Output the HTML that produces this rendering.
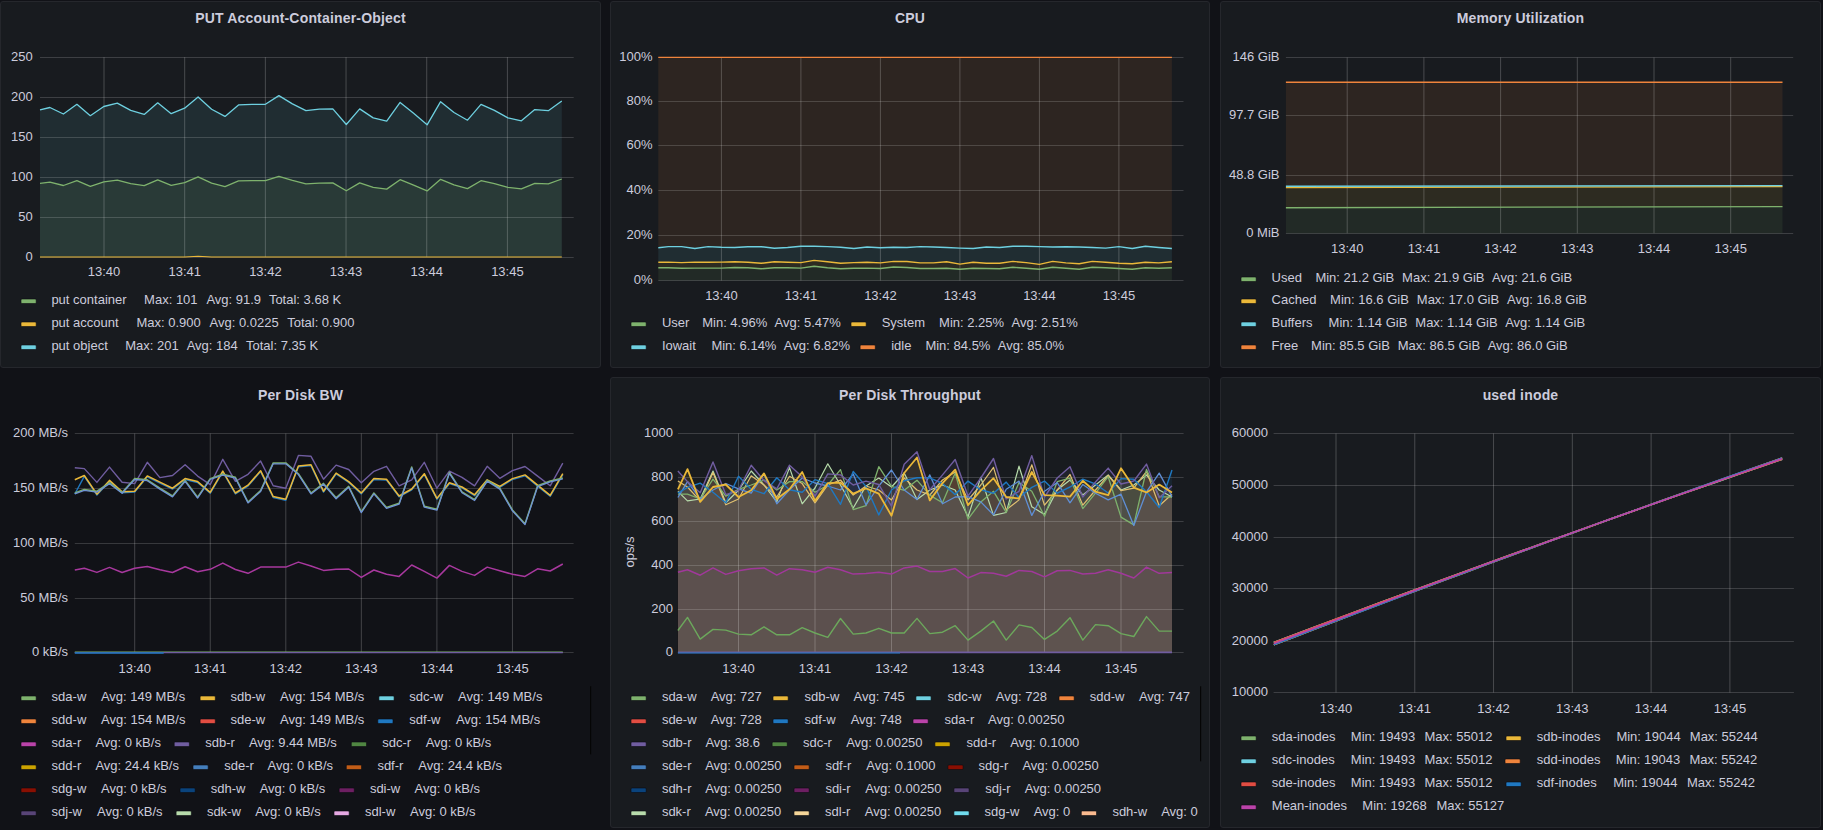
<!DOCTYPE html>
<html><head><meta charset="utf-8"><title>Grafana dashboard</title>
<style>
html,body{margin:0;padding:0;background:#111217;overflow:hidden;}
svg{display:block;font-family:"Liberation Sans",sans-serif;font-size:13px;fill:#ccccdc;}
</style></head><body>
<svg width="1823" height="830" viewBox="0 0 1823 830">
<rect width="1823" height="830" fill="#111217"/>
<rect x="0.5" y="1.5" width="600" height="366" rx="2.5" fill="#181b1f" stroke="#25272c" stroke-width="1"/>
<text x="300.5" y="22.9" text-anchor="middle" font-weight="bold" font-size="14" letter-spacing="0.18">PUT Account-Container-Object</text>
<text x="32.8" y="260.9" text-anchor="end">0</text>
<text x="32.8" y="220.9" text-anchor="end">50</text>
<text x="32.8" y="181.0" text-anchor="end">100</text>
<text x="32.8" y="141.0" text-anchor="end">150</text>
<text x="32.8" y="101.1" text-anchor="end">200</text>
<text x="32.8" y="61.1" text-anchor="end">250</text>
<polygon points="40.0,109.9 49.9,107.5 63.4,114.0 76.9,104.3 90.3,115.7 103.8,106.5 117.3,103.1 130.7,110.4 144.2,114.4 157.7,102.8 171.2,113.7 184.6,108.2 198.1,96.9 211.6,109.2 225.0,116.4 238.5,104.9 252.0,104.3 265.4,104.3 278.9,95.6 292.4,103.9 305.9,110.7 319.3,109.2 332.8,108.9 346.3,124.5 359.7,108.9 373.2,117.9 386.7,121.2 400.1,102.4 413.6,113.3 427.1,124.8 440.6,101.7 454.0,112.5 467.5,120.2 481.0,104.3 494.4,110.4 507.9,117.9 521.4,120.8 534.8,109.6 548.3,110.7 561.8,101.0 561.8,257.0 40.0,257.0" fill="#6ED0E0" fill-opacity="0.1"/>
<polygon points="40.0,183.4 49.9,182.2 63.4,185.5 76.9,180.7 90.3,186.3 103.8,181.8 117.3,180.1 130.7,183.7 144.2,185.7 157.7,179.9 171.2,185.3 184.6,182.6 198.1,176.9 211.6,183.1 225.0,186.7 238.5,180.9 252.0,180.7 265.4,180.7 278.9,176.3 292.4,180.4 305.9,183.8 319.3,183.1 332.8,182.9 346.3,190.8 359.7,182.9 373.2,187.4 386.7,189.1 400.1,179.7 413.6,185.2 427.1,190.9 440.6,179.3 454.0,184.8 467.5,188.6 481.0,180.7 494.4,183.7 507.9,187.4 521.4,188.9 534.8,183.3 548.3,183.8 561.8,179.0 561.8,257.0 40.0,257.0" fill="#7EB26D" fill-opacity="0.1"/>
<line x1="40.0" y1="257.50" x2="573.7" y2="257.50" stroke="rgba(255,255,255,0.16)" stroke-width="1"/>
<line x1="40.0" y1="217.50" x2="573.7" y2="217.50" stroke="rgba(255,255,255,0.16)" stroke-width="1"/>
<line x1="40.0" y1="177.50" x2="573.7" y2="177.50" stroke="rgba(255,255,255,0.16)" stroke-width="1"/>
<line x1="40.0" y1="137.50" x2="573.7" y2="137.50" stroke="rgba(255,255,255,0.16)" stroke-width="1"/>
<line x1="40.0" y1="97.50" x2="573.7" y2="97.50" stroke="rgba(255,255,255,0.16)" stroke-width="1"/>
<line x1="40.0" y1="57.50" x2="573.7" y2="57.50" stroke="rgba(255,255,255,0.16)" stroke-width="1"/>
<line x1="104.00" y1="57.2" x2="104.00" y2="257.0" stroke="rgba(255,255,255,0.21)" stroke-width="1"/>
<line x1="184.68" y1="57.2" x2="184.68" y2="257.0" stroke="rgba(255,255,255,0.21)" stroke-width="1"/>
<line x1="265.36" y1="57.2" x2="265.36" y2="257.0" stroke="rgba(255,255,255,0.21)" stroke-width="1"/>
<line x1="346.04" y1="57.2" x2="346.04" y2="257.0" stroke="rgba(255,255,255,0.21)" stroke-width="1"/>
<line x1="426.72" y1="57.2" x2="426.72" y2="257.0" stroke="rgba(255,255,255,0.21)" stroke-width="1"/>
<line x1="507.40" y1="57.2" x2="507.40" y2="257.0" stroke="rgba(255,255,255,0.21)" stroke-width="1"/>
<polyline points="40.0,109.9 49.9,107.5 63.4,114.0 76.9,104.3 90.3,115.7 103.8,106.5 117.3,103.1 130.7,110.4 144.2,114.4 157.7,102.8 171.2,113.7 184.6,108.2 198.1,96.9 211.6,109.2 225.0,116.4 238.5,104.9 252.0,104.3 265.4,104.3 278.9,95.6 292.4,103.9 305.9,110.7 319.3,109.2 332.8,108.9 346.3,124.5 359.7,108.9 373.2,117.9 386.7,121.2 400.1,102.4 413.6,113.3 427.1,124.8 440.6,101.7 454.0,112.5 467.5,120.2 481.0,104.3 494.4,110.4 507.9,117.9 521.4,120.8 534.8,109.6 548.3,110.7 561.8,101.0" fill="none" stroke="#6ED0E0" stroke-width="1.3" stroke-linejoin="round"/>
<polyline points="40.0,183.4 49.9,182.2 63.4,185.5 76.9,180.7 90.3,186.3 103.8,181.8 117.3,180.1 130.7,183.7 144.2,185.7 157.7,179.9 171.2,185.3 184.6,182.6 198.1,176.9 211.6,183.1 225.0,186.7 238.5,180.9 252.0,180.7 265.4,180.7 278.9,176.3 292.4,180.4 305.9,183.8 319.3,183.1 332.8,182.9 346.3,190.8 359.7,182.9 373.2,187.4 386.7,189.1 400.1,179.7 413.6,185.2 427.1,190.9 440.6,179.3 454.0,184.8 467.5,188.6 481.0,180.7 494.4,183.7 507.9,187.4 521.4,188.9 534.8,183.3 548.3,183.8 561.8,179.0" fill="none" stroke="#7EB26D" stroke-width="1.3" stroke-linejoin="round"/>
<polyline points="40.0,257.0 49.9,257.0 63.4,257.0 76.9,257.0 90.3,257.0 103.8,257.0 117.3,257.0 130.7,257.0 144.2,257.0 157.7,257.0 171.2,257.0 184.6,257.0 198.1,256.3 211.6,257.0 225.0,257.0 238.5,257.0 252.0,257.0 265.4,257.0 278.9,257.0 292.4,257.0 305.9,257.0 319.3,257.0 332.8,257.0 346.3,257.0 359.7,257.0 373.2,257.0 386.7,257.0 400.1,257.0 413.6,257.0 427.1,257.0 440.6,257.0 454.0,257.0 467.5,257.0 481.0,257.0 494.4,257.0 507.9,257.0 521.4,257.0 534.8,257.0 548.3,257.0 561.8,257.0" fill="none" stroke="#EAB839" stroke-width="1.1" stroke-linejoin="round"/>
<text x="104.0" y="275.9" text-anchor="middle">13:40</text>
<text x="184.7" y="275.9" text-anchor="middle">13:41</text>
<text x="265.4" y="275.9" text-anchor="middle">13:42</text>
<text x="346.0" y="275.9" text-anchor="middle">13:43</text>
<text x="426.7" y="275.9" text-anchor="middle">13:44</text>
<text x="507.4" y="275.9" text-anchor="middle">13:45</text>
<rect x="21.0" y="299.0" width="15.2" height="4.5" rx="1" fill="#7EB26D" stroke="#0b0c10" stroke-width="0.6"/>
<text x="51.4" y="304.0">put container</text>
<text x="144.1" y="304.0">Max: 101</text>
<text x="206.4" y="304.0">Avg: 91.9</text>
<text x="268.9" y="304.0">Total: 3.68 K</text>
<rect x="21.0" y="322.0" width="15.2" height="4.5" rx="1" fill="#EAB839" stroke="#0b0c10" stroke-width="0.6"/>
<text x="51.4" y="327.0">put account</text>
<text x="136.4" y="327.0">Max: 0.900</text>
<text x="209.5" y="327.0">Avg: 0.0225</text>
<text x="287.2" y="327.0">Total: 0.900</text>
<rect x="21.0" y="345.0" width="15.2" height="4.5" rx="1" fill="#6ED0E0" stroke="#0b0c10" stroke-width="0.6"/>
<text x="51.4" y="350.0">put object</text>
<text x="125.2" y="350.0">Max: 201</text>
<text x="186.7" y="350.0">Avg: 184</text>
<text x="246.0" y="350.0">Total: 7.35 K</text>
<rect x="610.5" y="1.5" width="599" height="366" rx="2.5" fill="#181b1f" stroke="#25272c" stroke-width="1"/>
<text x="910.0" y="22.9" text-anchor="middle" font-weight="bold" font-size="14" letter-spacing="0.18">CPU</text>
<text x="652.5" y="284.2" text-anchor="end">0%</text>
<text x="652.5" y="239.2" text-anchor="end">20%</text>
<text x="652.5" y="194.2" text-anchor="end">40%</text>
<text x="652.5" y="149.2" text-anchor="end">60%</text>
<text x="652.5" y="105.2" text-anchor="end">80%</text>
<text x="652.5" y="61.2" text-anchor="end">100%</text>
<polygon points="658.3,57.4 668.4,57.4 681.6,57.4 694.9,57.4 708.1,57.4 721.4,57.4 734.6,57.4 747.9,57.4 761.1,57.4 774.4,57.4 787.6,57.4 800.9,57.4 814.1,57.4 827.4,57.4 840.6,57.4 853.9,57.4 867.1,57.4 880.4,57.4 893.6,57.4 906.9,57.4 920.1,57.4 933.4,57.4 946.6,57.4 959.9,57.4 973.1,57.4 986.4,57.4 999.6,57.4 1012.9,57.4 1026.2,57.4 1039.4,57.4 1052.7,57.4 1065.9,57.4 1079.2,57.4 1092.4,57.4 1105.7,57.4 1118.9,57.4 1132.2,57.4 1145.4,57.4 1158.7,57.4 1171.9,57.4 1171.9,248.5 1158.7,247.5 1145.4,246.3 1132.2,248.5 1118.9,246.6 1105.7,248.1 1092.4,247.5 1079.2,247.0 1065.9,246.7 1052.7,247.0 1039.4,246.6 1026.2,246.3 1012.9,246.3 999.6,247.5 986.4,247.0 973.1,248.5 959.9,248.1 946.6,247.5 933.4,247.0 920.1,246.6 906.9,247.5 893.6,247.3 880.4,247.8 867.1,247.0 853.9,248.5 840.6,247.3 827.4,246.6 814.1,246.3 800.9,246.3 787.6,247.5 774.4,248.2 761.1,246.7 747.9,246.7 734.6,247.5 721.4,247.3 708.1,246.6 694.9,248.5 681.6,246.6 668.4,246.6 658.3,247.8" fill="#EF843C" fill-opacity="0.1"/>
<polygon points="658.3,247.8 668.4,246.6 681.6,246.6 694.9,248.5 708.1,246.6 721.4,247.3 734.6,247.5 747.9,246.7 761.1,246.7 774.4,248.2 787.6,247.5 800.9,246.3 814.1,246.3 827.4,246.6 840.6,247.3 853.9,248.5 867.1,247.0 880.4,247.8 893.6,247.3 906.9,247.5 920.1,246.6 933.4,247.0 946.6,247.5 959.9,248.1 973.1,248.5 986.4,247.0 999.6,247.5 1012.9,246.3 1026.2,246.3 1039.4,246.6 1052.7,247.0 1065.9,246.7 1079.2,247.0 1092.4,247.5 1105.7,248.1 1118.9,246.6 1132.2,248.5 1145.4,246.3 1158.7,247.5 1171.9,248.5 1171.9,261.8 1158.7,262.9 1145.4,262.3 1132.2,263.8 1118.9,263.3 1105.7,262.3 1092.4,261.4 1079.2,263.8 1065.9,262.9 1052.7,261.4 1039.4,264.4 1026.2,262.6 1012.9,261.4 999.6,263.3 986.4,263.3 973.1,262.3 959.9,264.1 946.6,261.8 933.4,262.9 920.1,262.9 906.9,261.5 893.6,261.4 880.4,262.9 867.1,262.3 853.9,262.6 840.6,263.3 827.4,261.8 814.1,260.4 800.9,262.6 787.6,262.3 774.4,261.8 761.1,263.3 747.9,262.3 734.6,261.8 721.4,262.1 708.1,262.3 694.9,262.1 681.6,262.6 668.4,262.1 658.3,262.3" fill="#6ED0E0" fill-opacity="0.1"/>
<polygon points="658.3,262.3 668.4,262.1 681.6,262.6 694.9,262.1 708.1,262.3 721.4,262.1 734.6,261.8 747.9,262.3 761.1,263.3 774.4,261.8 787.6,262.3 800.9,262.6 814.1,260.4 827.4,261.8 840.6,263.3 853.9,262.6 867.1,262.3 880.4,262.9 893.6,261.4 906.9,261.5 920.1,262.9 933.4,262.9 946.6,261.8 959.9,264.1 973.1,262.3 986.4,263.3 999.6,263.3 1012.9,261.4 1026.2,262.6 1039.4,264.4 1052.7,261.4 1065.9,262.9 1079.2,263.8 1092.4,261.4 1105.7,262.3 1118.9,263.3 1132.2,263.8 1145.4,262.3 1158.7,262.9 1171.9,261.8 1171.9,267.8 1158.7,268.2 1145.4,267.8 1132.2,269.2 1118.9,268.5 1105.7,267.8 1092.4,267.3 1079.2,269.2 1065.9,268.2 1052.7,267.3 1039.4,269.2 1026.2,268.2 1012.9,267.3 999.6,268.8 986.4,268.5 973.1,268.2 959.9,269.2 946.6,268.2 933.4,268.5 920.1,268.5 906.9,267.5 893.6,267.0 880.4,268.5 867.1,268.1 853.9,268.2 840.6,268.8 827.4,267.8 814.1,266.3 800.9,268.1 787.6,267.8 774.4,267.8 761.1,268.8 747.9,267.8 734.6,267.5 721.4,268.1 708.1,268.1 694.9,268.1 681.6,268.2 668.4,267.8 658.3,267.8" fill="#EAB839" fill-opacity="0.1"/>
<polygon points="658.3,267.8 668.4,267.8 681.6,268.2 694.9,268.1 708.1,268.1 721.4,268.1 734.6,267.5 747.9,267.8 761.1,268.8 774.4,267.8 787.6,267.8 800.9,268.1 814.1,266.3 827.4,267.8 840.6,268.8 853.9,268.2 867.1,268.1 880.4,268.5 893.6,267.0 906.9,267.5 920.1,268.5 933.4,268.5 946.6,268.2 959.9,269.2 973.1,268.2 986.4,268.5 999.6,268.8 1012.9,267.3 1026.2,268.2 1039.4,269.2 1052.7,267.3 1065.9,268.2 1079.2,269.2 1092.4,267.3 1105.7,267.8 1118.9,268.5 1132.2,269.2 1145.4,267.8 1158.7,268.2 1171.9,267.8 1171.9,280.4 658.3,280.4" fill="#7EB26D" fill-opacity="0.1"/>
<line x1="658.3" y1="280.50" x2="1183.5" y2="280.50" stroke="rgba(255,255,255,0.16)" stroke-width="1"/>
<line x1="658.3" y1="235.50" x2="1183.5" y2="235.50" stroke="rgba(255,255,255,0.16)" stroke-width="1"/>
<line x1="658.3" y1="190.50" x2="1183.5" y2="190.50" stroke="rgba(255,255,255,0.16)" stroke-width="1"/>
<line x1="658.3" y1="145.50" x2="1183.5" y2="145.50" stroke="rgba(255,255,255,0.16)" stroke-width="1"/>
<line x1="658.3" y1="101.50" x2="1183.5" y2="101.50" stroke="rgba(255,255,255,0.16)" stroke-width="1"/>
<line x1="658.3" y1="57.50" x2="1183.5" y2="57.50" stroke="rgba(255,255,255,0.16)" stroke-width="1"/>
<line x1="721.40" y1="57.5" x2="721.40" y2="280.5" stroke="rgba(255,255,255,0.21)" stroke-width="1"/>
<line x1="800.90" y1="57.5" x2="800.90" y2="280.5" stroke="rgba(255,255,255,0.21)" stroke-width="1"/>
<line x1="880.40" y1="57.5" x2="880.40" y2="280.5" stroke="rgba(255,255,255,0.21)" stroke-width="1"/>
<line x1="959.90" y1="57.5" x2="959.90" y2="280.5" stroke="rgba(255,255,255,0.21)" stroke-width="1"/>
<line x1="1039.40" y1="57.5" x2="1039.40" y2="280.5" stroke="rgba(255,255,255,0.21)" stroke-width="1"/>
<line x1="1118.90" y1="57.5" x2="1118.90" y2="280.5" stroke="rgba(255,255,255,0.21)" stroke-width="1"/>
<polyline points="658.3,267.8 668.4,267.8 681.6,268.2 694.9,268.1 708.1,268.1 721.4,268.1 734.6,267.5 747.9,267.8 761.1,268.8 774.4,267.8 787.6,267.8 800.9,268.1 814.1,266.3 827.4,267.8 840.6,268.8 853.9,268.2 867.1,268.1 880.4,268.5 893.6,267.0 906.9,267.5 920.1,268.5 933.4,268.5 946.6,268.2 959.9,269.2 973.1,268.2 986.4,268.5 999.6,268.8 1012.9,267.3 1026.2,268.2 1039.4,269.2 1052.7,267.3 1065.9,268.2 1079.2,269.2 1092.4,267.3 1105.7,267.8 1118.9,268.5 1132.2,269.2 1145.4,267.8 1158.7,268.2 1171.9,267.8" fill="none" stroke="#7EB26D" stroke-width="1.4" stroke-linejoin="round"/>
<polyline points="658.3,262.3 668.4,262.1 681.6,262.6 694.9,262.1 708.1,262.3 721.4,262.1 734.6,261.8 747.9,262.3 761.1,263.3 774.4,261.8 787.6,262.3 800.9,262.6 814.1,260.4 827.4,261.8 840.6,263.3 853.9,262.6 867.1,262.3 880.4,262.9 893.6,261.4 906.9,261.5 920.1,262.9 933.4,262.9 946.6,261.8 959.9,264.1 973.1,262.3 986.4,263.3 999.6,263.3 1012.9,261.4 1026.2,262.6 1039.4,264.4 1052.7,261.4 1065.9,262.9 1079.2,263.8 1092.4,261.4 1105.7,262.3 1118.9,263.3 1132.2,263.8 1145.4,262.3 1158.7,262.9 1171.9,261.8" fill="none" stroke="#EAB839" stroke-width="1.4" stroke-linejoin="round"/>
<polyline points="658.3,247.8 668.4,246.6 681.6,246.6 694.9,248.5 708.1,246.6 721.4,247.3 734.6,247.5 747.9,246.7 761.1,246.7 774.4,248.2 787.6,247.5 800.9,246.3 814.1,246.3 827.4,246.6 840.6,247.3 853.9,248.5 867.1,247.0 880.4,247.8 893.6,247.3 906.9,247.5 920.1,246.6 933.4,247.0 946.6,247.5 959.9,248.1 973.1,248.5 986.4,247.0 999.6,247.5 1012.9,246.3 1026.2,246.3 1039.4,246.6 1052.7,247.0 1065.9,246.7 1079.2,247.0 1092.4,247.5 1105.7,248.1 1118.9,246.6 1132.2,248.5 1145.4,246.3 1158.7,247.5 1171.9,248.5" fill="none" stroke="#6ED0E0" stroke-width="1.4" stroke-linejoin="round"/>
<polyline points="658.3,57.4 668.4,57.4 681.6,57.4 694.9,57.4 708.1,57.4 721.4,57.4 734.6,57.4 747.9,57.4 761.1,57.4 774.4,57.4 787.6,57.4 800.9,57.4 814.1,57.4 827.4,57.4 840.6,57.4 853.9,57.4 867.1,57.4 880.4,57.4 893.6,57.4 906.9,57.4 920.1,57.4 933.4,57.4 946.6,57.4 959.9,57.4 973.1,57.4 986.4,57.4 999.6,57.4 1012.9,57.4 1026.2,57.4 1039.4,57.4 1052.7,57.4 1065.9,57.4 1079.2,57.4 1092.4,57.4 1105.7,57.4 1118.9,57.4 1132.2,57.4 1145.4,57.4 1158.7,57.4 1171.9,57.4" fill="none" stroke="#EF843C" stroke-width="1.4" stroke-linejoin="round"/>
<text x="721.4" y="299.8" text-anchor="middle">13:40</text>
<text x="800.9" y="299.8" text-anchor="middle">13:41</text>
<text x="880.4" y="299.8" text-anchor="middle">13:42</text>
<text x="959.9" y="299.8" text-anchor="middle">13:43</text>
<text x="1039.4" y="299.8" text-anchor="middle">13:44</text>
<text x="1118.9" y="299.8" text-anchor="middle">13:45</text>
<rect x="631.0" y="322.0" width="15.2" height="4.5" rx="1" fill="#7EB26D" stroke="#0b0c10" stroke-width="0.6"/>
<text x="661.9" y="327.0">User</text>
<text x="702.2" y="327.0">Min: 4.96%</text>
<text x="774.6" y="327.0">Avg: 5.47%</text>
<rect x="851.0" y="322.0" width="15.2" height="4.5" rx="1" fill="#EAB839" stroke="#0b0c10" stroke-width="0.6"/>
<text x="881.7" y="327.0">System</text>
<text x="939.1" y="327.0">Min: 2.25%</text>
<text x="1011.5" y="327.0">Avg: 2.51%</text>
<rect x="631.0" y="345.0" width="15.2" height="4.5" rx="1" fill="#6ED0E0" stroke="#0b0c10" stroke-width="0.6"/>
<text x="661.9" y="350.0">Iowait</text>
<text x="711.4" y="350.0">Min: 6.14%</text>
<text x="783.8" y="350.0">Avg: 6.82%</text>
<rect x="860.1" y="345.0" width="15.2" height="4.5" rx="1" fill="#EF843C" stroke="#0b0c10" stroke-width="0.6"/>
<text x="891.2" y="350.0">idle</text>
<text x="925.4" y="350.0">Min: 84.5%</text>
<text x="997.8" y="350.0">Avg: 85.0%</text>
<rect x="1220.5" y="1.5" width="600" height="366" rx="2.5" fill="#181b1f" stroke="#25272c" stroke-width="1"/>
<text x="1520.5" y="22.9" text-anchor="middle" font-weight="bold" font-size="14" letter-spacing="0.18">Memory Utilization</text>
<text x="1279.5" y="61.4" text-anchor="end">146 GiB</text>
<text x="1279.5" y="119.4" text-anchor="end">97.7 GiB</text>
<text x="1279.5" y="179.3" text-anchor="end">48.8 GiB</text>
<text x="1279.5" y="237.1" text-anchor="end">0 MiB</text>
<polygon points="1285.9,82.3 1782.5,82.3 1782.5,185.6 1285.9,186.3" fill="#EF843C" fill-opacity="0.1"/>
<polygon points="1285.9,186.3 1782.5,185.6 1782.5,186.6 1285.9,187.6" fill="#6ED0E0" fill-opacity="0.1"/>
<polygon points="1285.9,187.6 1782.5,186.6 1782.5,206.6 1285.9,207.7" fill="#EAB839" fill-opacity="0.1"/>
<polygon points="1285.9,207.7 1782.5,206.6 1782.5,233.2 1285.9,233.2" fill="#7EB26D" fill-opacity="0.1"/>
<line x1="1285.9" y1="57.50" x2="1793.2" y2="57.50" stroke="rgba(255,255,255,0.16)" stroke-width="1"/>
<line x1="1285.9" y1="115.50" x2="1793.2" y2="115.50" stroke="rgba(255,255,255,0.16)" stroke-width="1"/>
<line x1="1285.9" y1="175.50" x2="1793.2" y2="175.50" stroke="rgba(255,255,255,0.16)" stroke-width="1"/>
<line x1="1285.9" y1="233.50" x2="1793.2" y2="233.50" stroke="rgba(255,255,255,0.16)" stroke-width="1"/>
<line x1="1347.20" y1="57.5" x2="1347.20" y2="233.2" stroke="rgba(255,255,255,0.21)" stroke-width="1"/>
<line x1="1423.90" y1="57.5" x2="1423.90" y2="233.2" stroke="rgba(255,255,255,0.21)" stroke-width="1"/>
<line x1="1500.60" y1="57.5" x2="1500.60" y2="233.2" stroke="rgba(255,255,255,0.21)" stroke-width="1"/>
<line x1="1577.30" y1="57.5" x2="1577.30" y2="233.2" stroke="rgba(255,255,255,0.21)" stroke-width="1"/>
<line x1="1654.00" y1="57.5" x2="1654.00" y2="233.2" stroke="rgba(255,255,255,0.21)" stroke-width="1"/>
<line x1="1730.70" y1="57.5" x2="1730.70" y2="233.2" stroke="rgba(255,255,255,0.21)" stroke-width="1"/>
<polyline points="1285.9,207.7 1782.5,206.6" fill="none" stroke="#7EB26D" stroke-width="1.4" stroke-linejoin="round"/>
<polyline points="1285.9,187.6 1782.5,186.6" fill="none" stroke="#EAB839" stroke-width="1.4" stroke-linejoin="round"/>
<polyline points="1285.9,186.3 1782.5,185.6" fill="none" stroke="#6ED0E0" stroke-width="1.4" stroke-linejoin="round"/>
<polyline points="1285.9,82.3 1782.5,82.3" fill="none" stroke="#EF843C" stroke-width="1.4" stroke-linejoin="round"/>
<text x="1347.2" y="252.6" text-anchor="middle">13:40</text>
<text x="1423.9" y="252.6" text-anchor="middle">13:41</text>
<text x="1500.6" y="252.6" text-anchor="middle">13:42</text>
<text x="1577.3" y="252.6" text-anchor="middle">13:43</text>
<text x="1654.0" y="252.6" text-anchor="middle">13:44</text>
<text x="1730.7" y="252.6" text-anchor="middle">13:45</text>
<rect x="1241.0" y="277.0" width="15.2" height="4.5" rx="1" fill="#7EB26D" stroke="#0b0c10" stroke-width="0.6"/>
<text x="1271.6" y="282.0">Used</text>
<text x="1315.4" y="282.0">Min: 21.2 GiB</text>
<text x="1402.1" y="282.0">Max: 21.9 GiB</text>
<text x="1492.1" y="282.0">Avg: 21.6 GiB</text>
<rect x="1241.0" y="299.0" width="15.2" height="4.5" rx="1" fill="#EAB839" stroke="#0b0c10" stroke-width="0.6"/>
<text x="1271.6" y="304.0">Cached</text>
<text x="1330.1" y="304.0">Min: 16.6 GiB</text>
<text x="1416.8" y="304.0">Max: 17.0 GiB</text>
<text x="1507.0" y="304.0">Avg: 16.8 GiB</text>
<rect x="1241.0" y="322.0" width="15.2" height="4.5" rx="1" fill="#6ED0E0" stroke="#0b0c10" stroke-width="0.6"/>
<text x="1271.6" y="327.0">Buffers</text>
<text x="1328.6" y="327.0">Min: 1.14 GiB</text>
<text x="1415.3" y="327.0">Max: 1.14 GiB</text>
<text x="1505.2" y="327.0">Avg: 1.14 GiB</text>
<rect x="1241.0" y="345.0" width="15.2" height="4.5" rx="1" fill="#EF843C" stroke="#0b0c10" stroke-width="0.6"/>
<text x="1271.6" y="350.0">Free</text>
<text x="1311.1" y="350.0">Min: 85.5 GiB</text>
<text x="1397.7" y="350.0">Max: 86.5 GiB</text>
<text x="1487.7" y="350.0">Avg: 86.0 GiB</text>
<text x="300.5" y="399.7" text-anchor="middle" font-weight="bold" font-size="14" letter-spacing="0.18">Per Disk BW</text>
<text x="68.0" y="656.2" text-anchor="end">0 kB/s</text>
<text x="68.0" y="602.2" text-anchor="end">50 MB/s</text>
<text x="68.0" y="547.2" text-anchor="end">100 MB/s</text>
<text x="68.0" y="492.2" text-anchor="end">150 MB/s</text>
<text x="68.0" y="437.2" text-anchor="end">200 MB/s</text>
<line x1="74.8" y1="652.50" x2="573.6" y2="652.50" stroke="rgba(255,255,255,0.16)" stroke-width="1"/>
<line x1="74.8" y1="598.50" x2="573.6" y2="598.50" stroke="rgba(255,255,255,0.16)" stroke-width="1"/>
<line x1="74.8" y1="543.50" x2="573.6" y2="543.50" stroke="rgba(255,255,255,0.16)" stroke-width="1"/>
<line x1="74.8" y1="488.50" x2="573.6" y2="488.50" stroke="rgba(255,255,255,0.16)" stroke-width="1"/>
<line x1="74.8" y1="433.50" x2="573.6" y2="433.50" stroke="rgba(255,255,255,0.16)" stroke-width="1"/>
<line x1="134.70" y1="433.5" x2="134.70" y2="652.5" stroke="rgba(255,255,255,0.21)" stroke-width="1"/>
<line x1="210.25" y1="433.5" x2="210.25" y2="652.5" stroke="rgba(255,255,255,0.21)" stroke-width="1"/>
<line x1="285.80" y1="433.5" x2="285.80" y2="652.5" stroke="rgba(255,255,255,0.21)" stroke-width="1"/>
<line x1="361.35" y1="433.5" x2="361.35" y2="652.5" stroke="rgba(255,255,255,0.21)" stroke-width="1"/>
<line x1="436.90" y1="433.5" x2="436.90" y2="652.5" stroke="rgba(255,255,255,0.21)" stroke-width="1"/>
<line x1="512.45" y1="433.5" x2="512.45" y2="652.5" stroke="rgba(255,255,255,0.21)" stroke-width="1"/>
<polyline points="74.8,652.2 562.8,652.2" fill="none" stroke="#7EB26D" stroke-width="1.2" stroke-linejoin="round"/>
<polyline points="74.8,652.6 562.8,652.6" fill="none" stroke="#705DA0" stroke-width="1.3" stroke-linejoin="round"/>
<polyline points="74.8,653.0 163.7,653.0" fill="none" stroke="#1F78C1" stroke-width="1.4" stroke-linejoin="round"/>
<polyline points="74.8,570.0 84.3,568.3 96.9,572.4 109.5,567.4 122.1,572.5 134.7,568.3 147.3,566.4 159.9,569.7 172.5,572.5 185.1,566.7 197.6,571.8 210.2,569.3 222.8,563.1 235.4,569.5 248.0,573.3 260.6,567.1 273.2,567.1 285.8,567.1 298.4,562.1 311.0,566.0 323.5,570.4 336.1,569.3 348.7,569.0 361.3,577.4 373.9,570.0 386.5,574.3 399.1,576.4 411.7,565.0 424.3,571.4 436.9,578.1 449.4,565.4 462.0,571.4 474.6,575.4 487.2,567.1 499.8,570.7 512.4,574.3 525.0,576.4 537.6,568.8 550.2,571.0 562.8,564.0" fill="none" stroke="#a8389e" stroke-width="1.5" stroke-linejoin="round"/>
<polyline points="74.8,467.7 84.3,468.6 96.9,482.4 109.5,467.1 122.1,482.2 134.7,483.6 147.3,462.3 159.9,477.6 172.5,475.5 185.1,464.7 197.6,476.1 210.2,484.6 222.8,459.3 235.4,481.3 248.0,474.3 260.6,461.1 273.2,485.8 285.8,488.2 298.4,455.4 311.0,456.3 323.5,479.2 336.1,465.1 348.7,469.5 361.3,482.8 373.9,471.3 386.5,466.3 399.1,485.8 411.7,479.8 424.3,462.3 436.9,488.2 449.4,471.1 462.0,477.3 474.6,485.8 487.2,466.3 499.8,478.3 512.4,470.7 525.0,466.5 537.6,476.1 550.2,485.8 562.8,463.1" fill="none" stroke="#705DA0" stroke-width="1.4" stroke-linejoin="round"/>
<polyline points="74.8,494.0 84.3,476.4 96.9,495.1 109.5,481.3 122.1,492.7 134.7,492.1 147.3,476.8 159.9,483.1 172.5,489.1 185.1,479.5 197.6,482.5 210.2,493.3 222.8,472.0 235.4,493.9 248.0,486.1 260.6,471.6 273.2,497.5 285.8,500.2 298.4,466.8 311.0,465.6 323.5,492.1 336.1,474.0 348.7,482.5 361.3,493.9 373.9,479.5 386.5,480.1 399.1,496.9 411.7,489.9 424.3,474.6 436.9,499.3 449.4,483.7 462.0,487.9 474.6,495.7 487.2,480.7 499.8,487.3 512.4,479.5 525.0,475.8 537.6,486.1 550.2,496.3 562.8,474.6" fill="none" stroke="#1F78C1" stroke-width="1.4" stroke-linejoin="round"/>
<polyline points="74.8,479.8 84.3,475.5 96.9,494.2 109.5,480.4 122.1,491.8 134.7,491.2 147.3,475.9 159.9,482.2 172.5,488.2 185.1,478.6 197.6,481.6 210.2,492.4 222.8,471.1 235.4,493.0 248.0,485.2 260.6,470.7 273.2,496.6 285.8,499.3 298.4,465.9 311.0,464.7 323.5,491.2 336.1,473.1 348.7,481.6 361.3,493.0 373.9,478.6 386.5,479.2 399.1,496.0 411.7,489.0 424.3,473.7 436.9,498.4 449.4,482.8 462.0,487.0 474.6,494.8 487.2,479.8 499.8,486.4 512.4,478.6 525.0,474.9 537.6,485.2 550.2,495.4 562.8,473.7" fill="none" stroke="#EAB839" stroke-width="1.5" stroke-linejoin="round"/>
<polyline points="74.8,493.0 84.3,489.4 96.9,491.2 109.5,482.8 122.1,492.4 134.7,478.6 147.3,479.8 159.9,488.2 172.5,496.0 185.1,480.4 197.6,497.2 210.2,478.6 222.8,474.3 235.4,477.3 248.0,502.0 260.6,490.6 273.2,462.9 285.8,462.9 298.4,473.7 311.0,493.0 323.5,483.4 336.1,497.8 348.7,486.4 361.3,511.7 373.9,493.0 386.5,507.5 399.1,503.3 411.7,467.0 424.3,506.3 436.9,509.3 449.4,472.5 462.0,491.8 474.6,499.6 487.2,480.4 499.8,488.2 512.4,509.9 525.0,523.7 537.6,485.8 550.2,481.0 562.8,478.0" fill="none" stroke="#7EB26D" stroke-width="1.5" stroke-linejoin="round"/>
<polyline points="74.8,493.8 84.3,490.3 96.9,492.1 109.5,483.7 122.1,493.3 134.7,479.5 147.3,480.7 159.9,489.1 172.5,496.9 185.1,481.3 197.6,498.1 210.2,479.5 222.8,475.2 235.4,478.2 248.0,502.9 260.6,491.5 273.2,463.8 285.8,463.8 298.4,474.6 311.0,493.9 323.5,484.3 336.1,498.7 348.7,487.3 361.3,512.6 373.9,493.9 386.5,508.4 399.1,504.2 411.7,467.9 424.3,507.2 436.9,510.2 449.4,473.4 462.0,492.7 474.6,500.5 487.2,481.3 499.8,489.1 512.4,510.8 525.0,524.6 537.6,486.7 550.2,481.9 562.8,478.9" fill="none" stroke="#6f92d4" stroke-width="1.3" stroke-linejoin="round"/>
<text x="134.7" y="672.8" text-anchor="middle">13:40</text>
<text x="210.2" y="672.8" text-anchor="middle">13:41</text>
<text x="285.8" y="672.8" text-anchor="middle">13:42</text>
<text x="361.3" y="672.8" text-anchor="middle">13:43</text>
<text x="436.9" y="672.8" text-anchor="middle">13:44</text>
<text x="512.5" y="672.8" text-anchor="middle">13:45</text>
<rect x="21.0" y="696.0" width="15.2" height="4.5" rx="1" fill="#7EB26D" stroke="#0b0c10" stroke-width="0.6"/>
<text x="51.6" y="701.0">sda-w</text>
<text x="100.9" y="701.0">Avg: 149 MB/s</text>
<rect x="200.1" y="696.0" width="15.2" height="4.5" rx="1" fill="#EAB839" stroke="#0b0c10" stroke-width="0.6"/>
<text x="230.5" y="701.0">sdb-w</text>
<text x="280.0" y="701.0">Avg: 154 MB/s</text>
<rect x="378.9" y="696.0" width="15.2" height="4.5" rx="1" fill="#6ED0E0" stroke="#0b0c10" stroke-width="0.6"/>
<text x="409.3" y="701.0">sdc-w</text>
<text x="458.1" y="701.0">Avg: 149 MB/s</text>
<rect x="21.0" y="719.0" width="15.2" height="4.5" rx="1" fill="#EF843C" stroke="#0b0c10" stroke-width="0.6"/>
<text x="51.6" y="724.0">sdd-w</text>
<text x="101.1" y="724.0">Avg: 154 MB/s</text>
<rect x="200.1" y="719.0" width="15.2" height="4.5" rx="1" fill="#E24D42" stroke="#0b0c10" stroke-width="0.6"/>
<text x="230.5" y="724.0">sde-w</text>
<text x="280.0" y="724.0">Avg: 149 MB/s</text>
<rect x="377.8" y="719.0" width="15.2" height="4.5" rx="1" fill="#1F78C1" stroke="#0b0c10" stroke-width="0.6"/>
<text x="409.3" y="724.0">sdf-w</text>
<text x="455.9" y="724.0">Avg: 154 MB/s</text>
<rect x="21.0" y="742.0" width="15.2" height="4.5" rx="1" fill="#BA43A9" stroke="#0b0c10" stroke-width="0.6"/>
<text x="51.6" y="747.0">sda-r</text>
<text x="95.4" y="747.0">Avg: 0 kB/s</text>
<rect x="174.2" y="742.0" width="15.2" height="4.5" rx="1" fill="#705DA0" stroke="#0b0c10" stroke-width="0.6"/>
<text x="205.3" y="747.0">sdb-r</text>
<text x="248.9" y="747.0">Avg: 9.44 MB/s</text>
<rect x="351.3" y="742.0" width="15.2" height="4.5" rx="1" fill="#508642" stroke="#0b0c10" stroke-width="0.6"/>
<text x="382.3" y="747.0">sdc-r</text>
<text x="425.7" y="747.0">Avg: 0 kB/s</text>
<rect x="21.0" y="765.0" width="15.2" height="4.5" rx="1" fill="#CCA300" stroke="#0b0c10" stroke-width="0.6"/>
<text x="51.6" y="770.0">sdd-r</text>
<text x="95.4" y="770.0">Avg: 24.4 kB/s</text>
<rect x="193.0" y="765.0" width="15.2" height="4.5" rx="1" fill="#447EBC" stroke="#0b0c10" stroke-width="0.6"/>
<text x="224.2" y="770.0">sde-r</text>
<text x="267.6" y="770.0">Avg: 0 kB/s</text>
<rect x="346.3" y="765.0" width="15.2" height="4.5" rx="1" fill="#C15C17" stroke="#0b0c10" stroke-width="0.6"/>
<text x="377.4" y="770.0">sdf-r</text>
<text x="418.3" y="770.0">Avg: 24.4 kB/s</text>
<rect x="21.0" y="788.0" width="15.2" height="4.5" rx="1" fill="#890F02" stroke="#0b0c10" stroke-width="0.6"/>
<text x="51.6" y="793.0">sdg-w</text>
<text x="101.1" y="793.0">Avg: 0 kB/s</text>
<rect x="180.0" y="788.0" width="15.2" height="4.5" rx="1" fill="#0A437C" stroke="#0b0c10" stroke-width="0.6"/>
<text x="210.7" y="793.0">sdh-w</text>
<text x="259.7" y="793.0">Avg: 0 kB/s</text>
<rect x="339.1" y="788.0" width="15.2" height="4.5" rx="1" fill="#6D1F62" stroke="#0b0c10" stroke-width="0.6"/>
<text x="369.9" y="793.0">sdi-w</text>
<text x="414.5" y="793.0">Avg: 0 kB/s</text>
<rect x="21.0" y="811.0" width="15.2" height="4.5" rx="1" fill="#584477" stroke="#0b0c10" stroke-width="0.6"/>
<text x="51.6" y="816.0">sdj-w</text>
<text x="97.0" y="816.0">Avg: 0 kB/s</text>
<rect x="176.1" y="811.0" width="15.2" height="4.5" rx="1" fill="#B7DBAB" stroke="#0b0c10" stroke-width="0.6"/>
<text x="206.9" y="816.0">sdk-w</text>
<text x="255.2" y="816.0">Avg: 0 kB/s</text>
<rect x="334.0" y="811.0" width="15.2" height="4.5" rx="1" fill="#E5A8E2" stroke="#0b0c10" stroke-width="0.6"/>
<text x="365.0" y="816.0">sdl-w</text>
<text x="410.0" y="816.0">Avg: 0 kB/s</text>
<rect x="590" y="686.3" width="1.2" height="68" fill="#050505"/>
<rect x="610.5" y="377.5" width="599" height="450" rx="2.5" fill="#181b1f" stroke="#25272c" stroke-width="1"/>
<text x="910.0" y="399.7" text-anchor="middle" font-weight="bold" font-size="14" letter-spacing="0.18">Per Disk Throughput</text>
<text x="673.0" y="656.2" text-anchor="end">0</text>
<text x="673.0" y="613.2" text-anchor="end">200</text>
<text x="673.0" y="569.2" text-anchor="end">400</text>
<text x="673.0" y="525.2" text-anchor="end">600</text>
<text x="673.0" y="481.2" text-anchor="end">800</text>
<text x="673.0" y="437.2" text-anchor="end">1000</text>
<text transform="translate(633.5,552) rotate(-90)" text-anchor="middle">ops/s</text>
<polygon points="677.9,630.5 687.5,617.4 700.2,639.1 713.0,629.4 725.8,630.1 738.5,634.1 751.2,634.8 764.0,626.8 776.8,634.8 789.5,634.8 802.2,627.6 815.0,633.0 827.8,637.3 840.5,618.5 853.2,634.1 866.0,633.0 878.8,628.3 891.5,633.0 904.2,633.0 917.0,618.4 929.8,633.6 942.5,632.2 955.2,625.7 968.0,640.1 980.8,631.1 993.5,621.0 1006.2,640.1 1019.0,624.9 1031.8,627.5 1044.5,639.4 1057.2,631.1 1070.0,617.7 1082.8,640.1 1095.5,624.6 1108.2,625.7 1121.0,633.6 1133.8,636.5 1146.5,616.6 1159.2,631.1 1172.0,631.1 1172.0,652.9 677.9,652.9" fill="#7EB26D" fill-opacity="0.05"/>
<polygon points="677.9,572.3 687.5,569.7 700.2,575.2 713.0,567.9 725.8,574.4 738.5,570.8 751.2,568.7 764.0,567.9 776.8,575.2 789.5,568.7 802.2,569.7 815.0,572.3 827.8,567.2 840.5,569.7 853.2,574.1 866.0,573.4 878.8,572.3 891.5,574.1 904.2,567.9 917.0,566.1 929.8,571.5 942.5,571.5 955.2,568.6 968.0,578.0 980.8,572.6 993.5,573.3 1006.2,576.2 1019.0,570.4 1031.8,571.5 1044.5,576.9 1057.2,570.8 1070.0,570.4 1082.8,574.0 1095.5,573.3 1108.2,569.7 1121.0,573.3 1133.8,578.0 1146.5,567.1 1159.2,573.3 1172.0,572.6 1172.0,652.9 677.9,652.9" fill="#BA43A9" fill-opacity="0.05"/>
<polygon points="677.9,491.3 687.5,500.9 700.2,499.0 713.0,471.0 725.8,502.8 738.5,490.3 751.2,471.0 764.0,485.0 776.8,501.9 789.5,467.6 802.2,503.8 815.0,488.0 827.8,463.8 840.5,485.0 853.2,508.0 866.0,485.9 878.8,478.0 891.5,487.0 904.2,473.0 917.0,499.5 929.8,490.0 942.5,485.0 955.2,490.0 968.0,516.8 980.8,477.3 993.5,515.4 1006.2,512.5 1019.0,466.2 1031.8,506.7 1044.5,514.4 1057.2,490.0 1070.0,480.0 1082.8,495.0 1095.5,485.0 1108.2,475.0 1121.0,490.0 1133.8,485.0 1146.5,475.0 1159.2,490.0 1172.0,497.0 1172.0,652.9 677.9,652.9" fill="#7EB26D" fill-opacity="0.1"/>
<polygon points="677.9,481.1 687.5,487.0 700.2,500.9 713.0,472.5 725.8,504.8 738.5,499.0 751.2,475.8 764.0,485.0 776.8,497.0 789.5,476.3 802.2,483.6 815.0,502.8 827.8,485.0 840.5,480.0 853.2,495.0 866.0,486.0 878.8,490.0 891.5,500.0 904.2,478.0 917.0,490.0 929.8,495.0 942.5,480.0 955.2,472.0 968.0,500.0 980.8,485.0 993.5,467.3 1006.2,509.8 1019.0,499.9 1031.8,464.8 1044.5,505.2 1057.2,490.0 1070.0,474.4 1082.8,505.2 1095.5,490.0 1108.2,475.5 1121.0,490.6 1133.8,488.2 1146.5,471.3 1159.2,505.7 1172.0,494.2 1172.0,652.9 677.9,652.9" fill="#EAB839" fill-opacity="0.1"/>
<polygon points="677.9,494.2 687.5,494.2 700.2,499.0 713.0,479.2 725.8,496.1 738.5,489.3 751.2,485.0 764.0,480.0 776.8,490.0 789.5,481.6 802.2,481.6 815.0,492.2 827.8,485.0 840.5,469.6 853.2,509.6 866.0,505.7 878.8,466.7 891.5,486.4 904.2,490.3 917.0,480.2 929.8,495.1 942.5,502.8 955.2,473.0 968.0,519.2 980.8,501.9 993.5,491.3 1006.2,512.5 1019.0,482.6 1031.8,491.3 1044.5,516.3 1057.2,481.6 1070.0,478.2 1082.8,508.6 1095.5,493.2 1108.2,476.7 1121.0,517.1 1133.8,524.9 1146.5,469.5 1159.2,496.6 1172.0,497.2 1172.0,652.9 677.9,652.9" fill="#E24D42" fill-opacity="0.1"/>
<polygon points="677.9,497.5 687.5,481.6 700.2,499.0 713.0,490.0 725.8,483.5 738.5,488.9 751.2,493.2 764.0,473.9 776.8,503.8 789.5,489.8 802.2,478.0 815.0,483.0 827.8,486.0 840.5,490.0 853.2,474.0 866.0,505.0 878.8,486.0 891.5,470.0 904.2,490.0 917.0,499.5 929.8,474.9 942.5,503.8 955.2,497.0 968.0,496.6 980.8,501.9 993.5,514.9 1006.2,489.3 1019.0,481.1 1031.8,515.4 1044.5,491.3 1057.2,482.6 1070.0,502.8 1082.8,484.5 1095.5,493.2 1108.2,499.9 1121.0,494.2 1133.8,525.5 1146.5,491.8 1159.2,473.1 1172.0,496.6 1172.0,652.9 677.9,652.9" fill="#705DA0" fill-opacity="0.1"/>
<polygon points="677.9,493.2 687.5,487.4 700.2,483.1 713.0,492.2 725.8,502.8 738.5,476.3 751.2,489.3 764.0,493.7 776.8,477.8 789.5,489.8 802.2,492.2 815.0,479.7 827.8,483.6 840.5,504.3 853.2,471.5 866.0,486.4 878.8,514.9 891.5,490.0 904.2,480.7 917.0,477.8 929.8,477.8 942.5,483.5 955.2,494.6 968.0,481.1 980.8,489.8 993.5,493.2 1006.2,482.1 1019.0,497.5 1031.8,487.4 1044.5,481.1 1057.2,493.2 1070.0,487.0 1082.8,479.2 1095.5,484.0 1108.2,493.0 1121.0,478.6 1133.8,479.2 1146.5,491.8 1159.2,507.5 1172.0,470.1 1172.0,652.9 677.9,652.9" fill="#1F78C1" fill-opacity="0.1"/>
<polygon points="677.9,471.0 687.5,481.6 700.2,492.7 713.0,461.9 725.8,494.6 738.5,490.3 751.2,465.2 764.0,480.7 776.8,488.9 789.5,465.2 802.2,476.8 815.0,496.1 827.8,473.9 840.5,474.9 853.2,485.0 866.0,481.1 878.8,484.5 891.5,506.2 904.2,464.3 917.0,451.7 929.8,489.8 942.5,474.9 955.2,459.5 968.0,496.1 980.8,478.0 993.5,458.5 1006.2,499.0 1019.0,491.3 1031.8,455.6 1044.5,497.0 1057.2,478.0 1070.0,466.7 1082.8,497.0 1095.5,482.0 1108.2,468.1 1121.0,484.0 1133.8,481.0 1146.5,464.1 1159.2,497.8 1172.0,485.8 1172.0,652.9 677.9,652.9" fill="#705DA0" fill-opacity="0.1"/>
<polygon points="677.9,489.3 687.5,469.1 700.2,501.9 713.0,487.0 725.8,484.5 738.5,497.0 751.2,490.3 764.0,473.4 776.8,499.0 789.5,489.3 802.2,472.0 815.0,500.9 827.8,483.1 840.5,482.6 853.2,493.7 866.0,488.4 878.8,493.7 891.5,515.8 904.2,473.0 917.0,457.5 929.8,500.4 942.5,483.1 955.2,469.6 968.0,505.2 980.8,490.3 993.5,478.2 1006.2,497.0 1019.0,498.5 1031.8,472.0 1044.5,495.1 1057.2,495.6 1070.0,496.6 1082.8,480.7 1095.5,491.7 1108.2,495.1 1121.0,468.3 1133.8,487.6 1146.5,492.4 1159.2,484.6 1172.0,492.4 1172.0,652.9 677.9,652.9" fill="#EAB839" fill-opacity="0.1"/>
<line x1="677.9" y1="652.50" x2="1183.6" y2="652.50" stroke="rgba(255,255,255,0.16)" stroke-width="1"/>
<line x1="677.9" y1="609.50" x2="1183.6" y2="609.50" stroke="rgba(255,255,255,0.16)" stroke-width="1"/>
<line x1="677.9" y1="565.50" x2="1183.6" y2="565.50" stroke="rgba(255,255,255,0.16)" stroke-width="1"/>
<line x1="677.9" y1="521.50" x2="1183.6" y2="521.50" stroke="rgba(255,255,255,0.16)" stroke-width="1"/>
<line x1="677.9" y1="477.50" x2="1183.6" y2="477.50" stroke="rgba(255,255,255,0.16)" stroke-width="1"/>
<line x1="677.9" y1="433.50" x2="1183.6" y2="433.50" stroke="rgba(255,255,255,0.16)" stroke-width="1"/>
<line x1="738.50" y1="433.5" x2="738.50" y2="652.5" stroke="rgba(255,255,255,0.21)" stroke-width="1"/>
<line x1="815.00" y1="433.5" x2="815.00" y2="652.5" stroke="rgba(255,255,255,0.21)" stroke-width="1"/>
<line x1="891.50" y1="433.5" x2="891.50" y2="652.5" stroke="rgba(255,255,255,0.21)" stroke-width="1"/>
<line x1="968.00" y1="433.5" x2="968.00" y2="652.5" stroke="rgba(255,255,255,0.21)" stroke-width="1"/>
<line x1="1044.50" y1="433.5" x2="1044.50" y2="652.5" stroke="rgba(255,255,255,0.21)" stroke-width="1"/>
<line x1="1121.00" y1="433.5" x2="1121.00" y2="652.5" stroke="rgba(255,255,255,0.21)" stroke-width="1"/>
<polyline points="677.9,652.4 1172.0,652.4" fill="none" stroke="#705DA0" stroke-width="1.6" stroke-linejoin="round"/>
<polyline points="677.9,653.0 900.0,653.0" fill="none" stroke="#1F78C1" stroke-width="1.2" stroke-linejoin="round"/>
<polyline points="677.9,630.5 687.5,617.4 700.2,639.1 713.0,629.4 725.8,630.1 738.5,634.1 751.2,634.8 764.0,626.8 776.8,634.8 789.5,634.8 802.2,627.6 815.0,633.0 827.8,637.3 840.5,618.5 853.2,634.1 866.0,633.0 878.8,628.3 891.5,633.0 904.2,633.0 917.0,618.4 929.8,633.6 942.5,632.2 955.2,625.7 968.0,640.1 980.8,631.1 993.5,621.0 1006.2,640.1 1019.0,624.9 1031.8,627.5 1044.5,639.4 1057.2,631.1 1070.0,617.7 1082.8,640.1 1095.5,624.6 1108.2,625.7 1121.0,633.6 1133.8,636.5 1146.5,616.6 1159.2,631.1 1172.0,631.1" fill="none" stroke="#6ca85c" stroke-width="1.4" stroke-linejoin="round"/>
<polyline points="677.9,572.3 687.5,569.7 700.2,575.2 713.0,567.9 725.8,574.4 738.5,570.8 751.2,568.7 764.0,567.9 776.8,575.2 789.5,568.7 802.2,569.7 815.0,572.3 827.8,567.2 840.5,569.7 853.2,574.1 866.0,573.4 878.8,572.3 891.5,574.1 904.2,567.9 917.0,566.1 929.8,571.5 942.5,571.5 955.2,568.6 968.0,578.0 980.8,572.6 993.5,573.3 1006.2,576.2 1019.0,570.4 1031.8,571.5 1044.5,576.9 1057.2,570.8 1070.0,570.4 1082.8,574.0 1095.5,573.3 1108.2,569.7 1121.0,573.3 1133.8,578.0 1146.5,567.1 1159.2,573.3 1172.0,572.6" fill="none" stroke="#a0389a" stroke-width="1.5" stroke-linejoin="round"/>
<polyline points="677.9,491.3 687.5,500.9 700.2,499.0 713.0,471.0 725.8,502.8 738.5,490.3 751.2,471.0 764.0,485.0 776.8,501.9 789.5,467.6 802.2,503.8 815.0,488.0 827.8,463.8 840.5,485.0 853.2,508.0 866.0,485.9 878.8,478.0 891.5,487.0 904.2,473.0 917.0,499.5 929.8,490.0 942.5,485.0 955.2,490.0 968.0,516.8 980.8,477.3 993.5,515.4 1006.2,512.5 1019.0,466.2 1031.8,506.7 1044.5,514.4 1057.2,490.0 1070.0,480.0 1082.8,495.0 1095.5,485.0 1108.2,475.0 1121.0,490.0 1133.8,485.0 1146.5,475.0 1159.2,490.0 1172.0,497.0" fill="none" stroke="#B7DBAB" stroke-width="1.2" stroke-linejoin="round"/>
<polyline points="677.9,481.1 687.5,487.0 700.2,500.9 713.0,472.5 725.8,504.8 738.5,499.0 751.2,475.8 764.0,485.0 776.8,497.0 789.5,476.3 802.2,483.6 815.0,502.8 827.8,485.0 840.5,480.0 853.2,495.0 866.0,486.0 878.8,490.0 891.5,500.0 904.2,478.0 917.0,490.0 929.8,495.0 942.5,480.0 955.2,472.0 968.0,500.0 980.8,485.0 993.5,467.3 1006.2,509.8 1019.0,499.9 1031.8,464.8 1044.5,505.2 1057.2,490.0 1070.0,474.4 1082.8,505.2 1095.5,490.0 1108.2,475.5 1121.0,490.6 1133.8,488.2 1146.5,471.3 1159.2,505.7 1172.0,494.2" fill="none" stroke="#E0C070" stroke-width="1.2" stroke-linejoin="round"/>
<polyline points="677.9,494.2 687.5,494.2 700.2,499.0 713.0,479.2 725.8,496.1 738.5,489.3 751.2,485.0 764.0,480.0 776.8,490.0 789.5,481.6 802.2,481.6 815.0,492.2 827.8,485.0 840.5,469.6 853.2,509.6 866.0,505.7 878.8,466.7 891.5,486.4 904.2,490.3 917.0,480.2 929.8,495.1 942.5,502.8 955.2,473.0 968.0,519.2 980.8,501.9 993.5,491.3 1006.2,512.5 1019.0,482.6 1031.8,491.3 1044.5,516.3 1057.2,481.6 1070.0,478.2 1082.8,508.6 1095.5,493.2 1108.2,476.7 1121.0,517.1 1133.8,524.9 1146.5,469.5 1159.2,496.6 1172.0,497.2" fill="none" stroke="#7EB26D" stroke-width="1.3" stroke-linejoin="round"/>
<polyline points="677.9,497.5 687.5,481.6 700.2,499.0 713.0,490.0 725.8,483.5 738.5,488.9 751.2,493.2 764.0,473.9 776.8,503.8 789.5,489.8 802.2,478.0 815.0,483.0 827.8,486.0 840.5,490.0 853.2,474.0 866.0,505.0 878.8,486.0 891.5,470.0 904.2,490.0 917.0,499.5 929.8,474.9 942.5,503.8 955.2,497.0 968.0,496.6 980.8,501.9 993.5,514.9 1006.2,489.3 1019.0,481.1 1031.8,515.4 1044.5,491.3 1057.2,482.6 1070.0,502.8 1082.8,484.5 1095.5,493.2 1108.2,499.9 1121.0,494.2 1133.8,525.5 1146.5,491.8 1159.2,473.1 1172.0,496.6" fill="none" stroke="#5f8fd6" stroke-width="1.3" stroke-linejoin="round"/>
<polyline points="677.9,493.2 687.5,487.4 700.2,483.1 713.0,492.2 725.8,502.8 738.5,476.3 751.2,489.3 764.0,493.7 776.8,477.8 789.5,489.8 802.2,492.2 815.0,479.7 827.8,483.6 840.5,504.3 853.2,471.5 866.0,486.4 878.8,514.9 891.5,490.0 904.2,480.7 917.0,477.8 929.8,477.8 942.5,483.5 955.2,494.6 968.0,481.1 980.8,489.8 993.5,493.2 1006.2,482.1 1019.0,497.5 1031.8,487.4 1044.5,481.1 1057.2,493.2 1070.0,487.0 1082.8,479.2 1095.5,484.0 1108.2,493.0 1121.0,478.6 1133.8,479.2 1146.5,491.8 1159.2,507.5 1172.0,470.1" fill="none" stroke="#1F78C1" stroke-width="1.4" stroke-linejoin="round"/>
<polyline points="677.9,471.0 687.5,481.6 700.2,492.7 713.0,461.9 725.8,494.6 738.5,490.3 751.2,465.2 764.0,480.7 776.8,488.9 789.5,465.2 802.2,476.8 815.0,496.1 827.8,473.9 840.5,474.9 853.2,485.0 866.0,481.1 878.8,484.5 891.5,506.2 904.2,464.3 917.0,451.7 929.8,489.8 942.5,474.9 955.2,459.5 968.0,496.1 980.8,478.0 993.5,458.5 1006.2,499.0 1019.0,491.3 1031.8,455.6 1044.5,497.0 1057.2,478.0 1070.0,466.7 1082.8,497.0 1095.5,482.0 1108.2,468.1 1121.0,484.0 1133.8,481.0 1146.5,464.1 1159.2,497.8 1172.0,485.8" fill="none" stroke="#705DA0" stroke-width="1.4" stroke-linejoin="round"/>
<polyline points="677.9,489.3 687.5,469.1 700.2,501.9 713.0,487.0 725.8,484.5 738.5,497.0 751.2,490.3 764.0,473.4 776.8,499.0 789.5,489.3 802.2,472.0 815.0,500.9 827.8,483.1 840.5,482.6 853.2,493.7 866.0,488.4 878.8,493.7 891.5,515.8 904.2,473.0 917.0,457.5 929.8,500.4 942.5,483.1 955.2,469.6 968.0,505.2 980.8,490.3 993.5,478.2 1006.2,497.0 1019.0,498.5 1031.8,472.0 1044.5,495.1 1057.2,495.6 1070.0,496.6 1082.8,480.7 1095.5,491.7 1108.2,495.1 1121.0,468.3 1133.8,487.6 1146.5,492.4 1159.2,484.6 1172.0,492.4" fill="none" stroke="#EAB839" stroke-width="1.8" stroke-linejoin="round"/>
<text x="738.5" y="672.8" text-anchor="middle">13:40</text>
<text x="815.0" y="672.8" text-anchor="middle">13:41</text>
<text x="891.5" y="672.8" text-anchor="middle">13:42</text>
<text x="968.0" y="672.8" text-anchor="middle">13:43</text>
<text x="1044.5" y="672.8" text-anchor="middle">13:44</text>
<text x="1121.0" y="672.8" text-anchor="middle">13:45</text>
<rect x="631.0" y="696.0" width="15.2" height="4.5" rx="1" fill="#7EB26D" stroke="#0b0c10" stroke-width="0.6"/>
<text x="661.9" y="701.0">sda-w</text>
<text x="710.7" y="701.0">Avg: 727</text>
<rect x="773.0" y="696.0" width="15.2" height="4.5" rx="1" fill="#EAB839" stroke="#0b0c10" stroke-width="0.6"/>
<text x="804.6" y="701.0">sdb-w</text>
<text x="853.6" y="701.0">Avg: 745</text>
<rect x="915.9" y="696.0" width="15.2" height="4.5" rx="1" fill="#6ED0E0" stroke="#0b0c10" stroke-width="0.6"/>
<text x="947.5" y="701.0">sdc-w</text>
<text x="995.8" y="701.0">Avg: 728</text>
<rect x="1059.0" y="696.0" width="15.2" height="4.5" rx="1" fill="#EF843C" stroke="#0b0c10" stroke-width="0.6"/>
<text x="1089.8" y="701.0">sdd-w</text>
<text x="1138.9" y="701.0">Avg: 747</text>
<rect x="631.0" y="719.0" width="15.2" height="4.5" rx="1" fill="#E24D42" stroke="#0b0c10" stroke-width="0.6"/>
<text x="661.9" y="724.0">sde-w</text>
<text x="710.7" y="724.0">Avg: 728</text>
<rect x="773.0" y="719.0" width="15.2" height="4.5" rx="1" fill="#1F78C1" stroke="#0b0c10" stroke-width="0.6"/>
<text x="804.6" y="724.0">sdf-w</text>
<text x="850.7" y="724.0">Avg: 748</text>
<rect x="913.0" y="719.0" width="15.2" height="4.5" rx="1" fill="#BA43A9" stroke="#0b0c10" stroke-width="0.6"/>
<text x="944.6" y="724.0">sda-r</text>
<text x="988.0" y="724.0">Avg: 0.00250</text>
<rect x="631.0" y="742.0" width="15.2" height="4.5" rx="1" fill="#705DA0" stroke="#0b0c10" stroke-width="0.6"/>
<text x="661.9" y="747.0">sdb-r</text>
<text x="705.4" y="747.0">Avg: 38.6</text>
<rect x="772.1" y="742.0" width="15.2" height="4.5" rx="1" fill="#508642" stroke="#0b0c10" stroke-width="0.6"/>
<text x="803.0" y="747.0">sdc-r</text>
<text x="846.2" y="747.0">Avg: 0.00250</text>
<rect x="934.9" y="742.0" width="15.2" height="4.5" rx="1" fill="#CCA300" stroke="#0b0c10" stroke-width="0.6"/>
<text x="966.5" y="747.0">sdd-r</text>
<text x="1010.2" y="747.0">Avg: 0.1000</text>
<rect x="631.0" y="765.0" width="15.2" height="4.5" rx="1" fill="#447EBC" stroke="#0b0c10" stroke-width="0.6"/>
<text x="661.9" y="770.0">sde-r</text>
<text x="705.2" y="770.0">Avg: 0.00250</text>
<rect x="794.0" y="765.0" width="15.2" height="4.5" rx="1" fill="#C15C17" stroke="#0b0c10" stroke-width="0.6"/>
<text x="825.4" y="770.0">sdf-r</text>
<text x="866.3" y="770.0">Avg: 0.1000</text>
<rect x="947.9" y="765.0" width="15.2" height="4.5" rx="1" fill="#890F02" stroke="#0b0c10" stroke-width="0.6"/>
<text x="978.6" y="770.0">sdg-r</text>
<text x="1022.4" y="770.0">Avg: 0.00250</text>
<rect x="631.0" y="788.0" width="15.2" height="4.5" rx="1" fill="#0A437C" stroke="#0b0c10" stroke-width="0.6"/>
<text x="661.9" y="793.0">sdh-r</text>
<text x="705.2" y="793.0">Avg: 0.00250</text>
<rect x="794.0" y="788.0" width="15.2" height="4.5" rx="1" fill="#6D1F62" stroke="#0b0c10" stroke-width="0.6"/>
<text x="825.4" y="793.0">sdi-r</text>
<text x="865.2" y="793.0">Avg: 0.00250</text>
<rect x="953.9" y="788.0" width="15.2" height="4.5" rx="1" fill="#584477" stroke="#0b0c10" stroke-width="0.6"/>
<text x="985.3" y="793.0">sdj-r</text>
<text x="1024.7" y="793.0">Avg: 0.00250</text>
<rect x="631.0" y="811.0" width="15.2" height="4.5" rx="1" fill="#B7DBAB" stroke="#0b0c10" stroke-width="0.6"/>
<text x="661.9" y="816.0">sdk-r</text>
<text x="704.9" y="816.0">Avg: 0.00250</text>
<rect x="794.0" y="811.0" width="15.2" height="4.5" rx="1" fill="#F4D598" stroke="#0b0c10" stroke-width="0.6"/>
<text x="825.1" y="816.0">sdl-r</text>
<text x="864.8" y="816.0">Avg: 0.00250</text>
<rect x="953.9" y="811.0" width="15.2" height="4.5" rx="1" fill="#70DBED" stroke="#0b0c10" stroke-width="0.6"/>
<text x="984.6" y="816.0">sdg-w</text>
<text x="1033.7" y="816.0">Avg: 0</text>
<rect x="1081.3" y="811.0" width="15.2" height="4.5" rx="1" fill="#F9BA8F" stroke="#0b0c10" stroke-width="0.6"/>
<text x="1112.4" y="816.0">sdh-w</text>
<text x="1161.2" y="816.0">Avg: 0</text>
<rect x="1200" y="686.3" width="1.2" height="75" fill="#050505"/>
<rect x="1220.5" y="377.5" width="600" height="450" rx="2.5" fill="#181b1f" stroke="#25272c" stroke-width="1"/>
<text x="1520.5" y="399.7" text-anchor="middle" font-weight="bold" font-size="14" letter-spacing="0.18">used inode</text>
<text x="1268.0" y="696.2" text-anchor="end">10000</text>
<text x="1268.0" y="645.2" text-anchor="end">20000</text>
<text x="1268.0" y="592.2" text-anchor="end">30000</text>
<text x="1268.0" y="541.2" text-anchor="end">40000</text>
<text x="1268.0" y="489.2" text-anchor="end">50000</text>
<text x="1268.0" y="437.2" text-anchor="end">60000</text>
<line x1="1273.6" y1="692.50" x2="1793.9" y2="692.50" stroke="rgba(255,255,255,0.16)" stroke-width="1"/>
<line x1="1273.6" y1="641.50" x2="1793.9" y2="641.50" stroke="rgba(255,255,255,0.16)" stroke-width="1"/>
<line x1="1273.6" y1="588.50" x2="1793.9" y2="588.50" stroke="rgba(255,255,255,0.16)" stroke-width="1"/>
<line x1="1273.6" y1="537.50" x2="1793.9" y2="537.50" stroke="rgba(255,255,255,0.16)" stroke-width="1"/>
<line x1="1273.6" y1="485.50" x2="1793.9" y2="485.50" stroke="rgba(255,255,255,0.16)" stroke-width="1"/>
<line x1="1273.6" y1="433.50" x2="1793.9" y2="433.50" stroke="rgba(255,255,255,0.16)" stroke-width="1"/>
<line x1="1336.00" y1="433.5" x2="1336.00" y2="692.5" stroke="rgba(255,255,255,0.21)" stroke-width="1"/>
<line x1="1414.78" y1="433.5" x2="1414.78" y2="692.5" stroke="rgba(255,255,255,0.21)" stroke-width="1"/>
<line x1="1493.56" y1="433.5" x2="1493.56" y2="692.5" stroke="rgba(255,255,255,0.21)" stroke-width="1"/>
<line x1="1572.34" y1="433.5" x2="1572.34" y2="692.5" stroke="rgba(255,255,255,0.21)" stroke-width="1"/>
<line x1="1651.12" y1="433.5" x2="1651.12" y2="692.5" stroke="rgba(255,255,255,0.21)" stroke-width="1"/>
<line x1="1729.90" y1="433.5" x2="1729.90" y2="692.5" stroke="rgba(255,255,255,0.21)" stroke-width="1"/>
<polyline points="1273.8,642.5 1295.0,634.5 1316.2,626.5 1337.3,618.6 1358.5,610.7 1379.7,602.8 1400.9,595.0 1422.1,587.2 1443.3,579.4 1464.5,571.7 1485.6,564.0 1506.8,556.3 1528.0,548.6 1549.2,541.0 1570.4,533.4 1591.5,525.9 1612.7,518.3 1633.9,510.8 1655.1,503.4 1676.3,495.9 1697.5,488.5 1718.7,481.2 1739.8,473.8 1761.0,466.5 1782.2,459.2" fill="none" stroke="#7EB26D" stroke-width="1.5" stroke-linejoin="round"/>
<polyline points="1273.8,644.8 1295.0,636.7 1316.2,628.6 1337.3,620.5 1358.5,612.4 1379.7,604.4 1400.9,596.4 1422.1,588.5 1443.3,580.6 1464.5,572.7 1485.6,564.8 1506.8,557.0 1528.0,549.2 1549.2,541.4 1570.4,533.7 1591.5,526.0 1612.7,518.3 1633.9,510.7 1655.1,503.0 1676.3,495.5 1697.5,487.9 1718.7,480.4 1739.8,472.9 1761.0,465.5 1782.2,458.0" fill="none" stroke="#EAB839" stroke-width="1.5" stroke-linejoin="round"/>
<polyline points="1273.8,642.5 1295.0,634.5 1316.2,626.5 1337.3,618.6 1358.5,610.7 1379.7,602.8 1400.9,595.0 1422.1,587.2 1443.3,579.4 1464.5,571.7 1485.6,564.0 1506.8,556.3 1528.0,548.6 1549.2,541.0 1570.4,533.4 1591.5,525.9 1612.7,518.3 1633.9,510.8 1655.1,503.4 1676.3,495.9 1697.5,488.5 1718.7,481.2 1739.8,473.8 1761.0,466.5 1782.2,459.2" fill="none" stroke="#6ED0E0" stroke-width="1.5" stroke-linejoin="round"/>
<polyline points="1273.8,644.8 1295.0,636.7 1316.2,628.6 1337.3,620.5 1358.5,612.4 1379.7,604.4 1400.9,596.4 1422.1,588.5 1443.3,580.6 1464.5,572.7 1485.6,564.8 1506.8,557.0 1528.0,549.2 1549.2,541.4 1570.4,533.7 1591.5,526.0 1612.7,518.3 1633.9,510.7 1655.1,503.0 1676.3,495.5 1697.5,487.9 1718.7,480.4 1739.8,472.9 1761.0,465.5 1782.2,458.0" fill="none" stroke="#EF843C" stroke-width="1.5" stroke-linejoin="round"/>
<polyline points="1273.8,642.4 1295.0,634.4 1316.2,626.5 1337.3,618.5 1358.5,610.6 1379.7,602.8 1400.9,594.9 1422.1,587.1 1443.3,579.4 1464.5,571.6 1485.6,563.9 1506.8,556.2 1528.0,548.6 1549.2,541.0 1570.4,533.4 1591.5,525.8 1612.7,518.3 1633.9,510.8 1655.1,503.3 1676.3,495.9 1697.5,488.5 1718.7,481.1 1739.8,473.8 1761.0,466.5 1782.2,459.2" fill="none" stroke="#E24D42" stroke-width="1.5" stroke-linejoin="round"/>
<polyline points="1273.8,644.9 1295.0,636.8 1316.2,628.6 1337.3,620.6 1358.5,612.5 1379.7,604.5 1400.9,596.5 1422.1,588.5 1443.3,580.6 1464.5,572.7 1485.6,564.8 1506.8,557.0 1528.0,549.2 1549.2,541.4 1570.4,533.7 1591.5,525.9 1612.7,518.3 1633.9,510.6 1655.1,503.0 1676.3,495.4 1697.5,487.8 1718.7,480.3 1739.8,472.8 1761.0,465.4 1782.2,457.9" fill="none" stroke="#1F78C1" stroke-width="1.5" stroke-linejoin="round"/>
<polyline points="1273.8,643.6 1295.0,635.5 1316.2,627.5 1337.3,619.5 1358.5,611.5 1379.7,603.6 1400.9,595.7 1422.1,587.8 1443.3,580.0 1464.5,572.1 1485.6,564.3 1506.8,556.6 1528.0,548.9 1549.2,541.2 1570.4,533.5 1591.5,525.9 1612.7,518.3 1633.9,510.7 1655.1,503.2 1676.3,495.7 1697.5,488.2 1718.7,480.8 1739.8,473.4 1761.0,466.0 1782.2,458.6" fill="none" stroke="#BA43A9" stroke-width="1.5" stroke-linejoin="round"/>
<text x="1336.0" y="712.8" text-anchor="middle">13:40</text>
<text x="1414.8" y="712.8" text-anchor="middle">13:41</text>
<text x="1493.6" y="712.8" text-anchor="middle">13:42</text>
<text x="1572.3" y="712.8" text-anchor="middle">13:43</text>
<text x="1651.1" y="712.8" text-anchor="middle">13:44</text>
<text x="1729.9" y="712.8" text-anchor="middle">13:45</text>
<rect x="1241.0" y="736.0" width="15.2" height="4.5" rx="1" fill="#7EB26D" stroke="#0b0c10" stroke-width="0.6"/>
<text x="1271.8" y="741.0">sda-inodes</text>
<text x="1350.8" y="741.0">Min: 19493</text>
<text x="1424.5" y="741.0">Max: 55012</text>
<rect x="1506.0" y="736.0" width="15.2" height="4.5" rx="1" fill="#EAB839" stroke="#0b0c10" stroke-width="0.6"/>
<text x="1536.8" y="741.0">sdb-inodes</text>
<text x="1616.4" y="741.0">Min: 19044</text>
<text x="1689.8" y="741.0">Max: 55244</text>
<rect x="1241.0" y="759.0" width="15.2" height="4.5" rx="1" fill="#6ED0E0" stroke="#0b0c10" stroke-width="0.6"/>
<text x="1271.8" y="764.0">sdc-inodes</text>
<text x="1350.8" y="764.0">Min: 19493</text>
<text x="1424.5" y="764.0">Max: 55012</text>
<rect x="1505.0" y="759.0" width="15.2" height="4.5" rx="1" fill="#EF843C" stroke="#0b0c10" stroke-width="0.6"/>
<text x="1536.8" y="764.0">sdd-inodes</text>
<text x="1615.8" y="764.0">Min: 19043</text>
<text x="1689.4" y="764.0">Max: 55242</text>
<rect x="1241.0" y="782.0" width="15.2" height="4.5" rx="1" fill="#E24D42" stroke="#0b0c10" stroke-width="0.6"/>
<text x="1271.8" y="787.0">sde-inodes</text>
<text x="1350.8" y="787.0">Min: 19493</text>
<text x="1424.5" y="787.0">Max: 55012</text>
<rect x="1506.0" y="782.0" width="15.2" height="4.5" rx="1" fill="#1F78C1" stroke="#0b0c10" stroke-width="0.6"/>
<text x="1536.8" y="787.0">sdf-inodes</text>
<text x="1613.2" y="787.0">Min: 19044</text>
<text x="1687.0" y="787.0">Max: 55242</text>
<rect x="1241.0" y="805.0" width="15.2" height="4.5" rx="1" fill="#BA43A9" stroke="#0b0c10" stroke-width="0.6"/>
<text x="1271.8" y="810.0">Mean-inodes</text>
<text x="1362.3" y="810.0">Min: 19268</text>
<text x="1436.4" y="810.0">Max: 55127</text>
</svg>
</body></html>
